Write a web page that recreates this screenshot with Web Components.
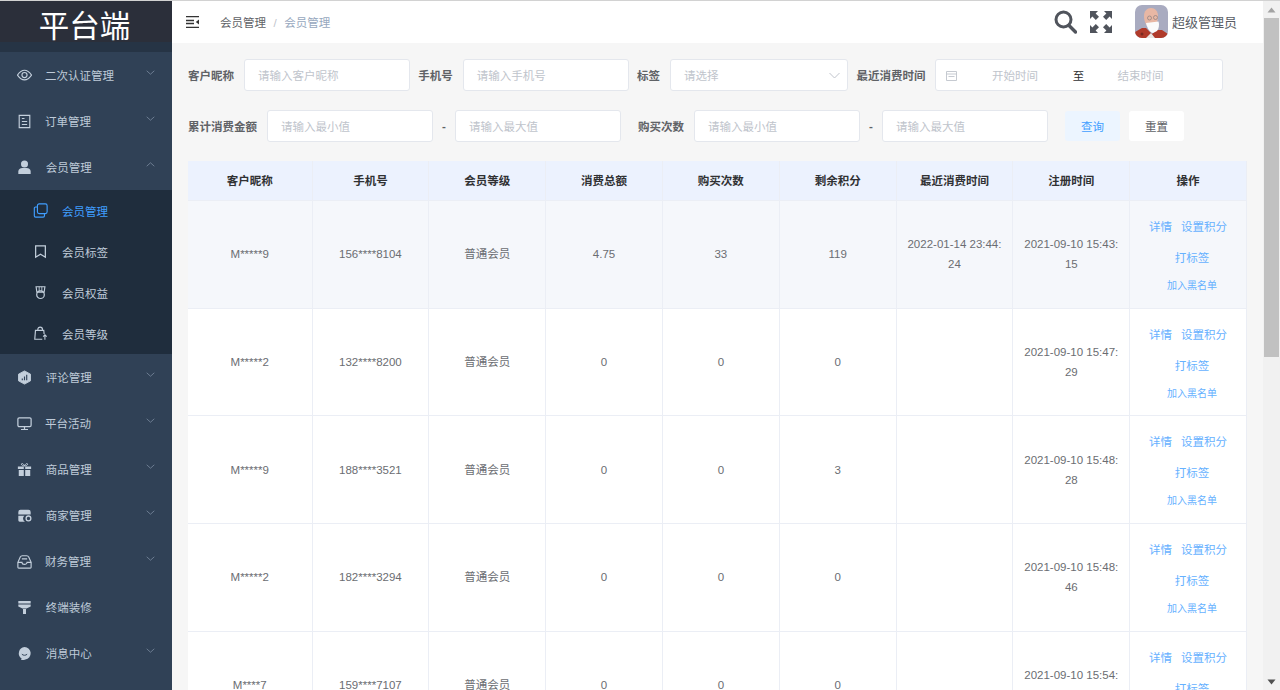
<!DOCTYPE html>
<html lang="zh">
<head>
<meta charset="utf-8">
<title>平台端</title>
<style>
  html, body { margin: 0; height: 100%; overflow: hidden; }
  body { font-family: "Liberation Sans", "Noto Sans CJK SC", sans-serif; font-size: 11.5px; }
</style>
</head>
<body>
<admin-app>
  <side-bar slot="side"></side-bar>
  <top-bar slot="top"></top-bar>
  <filter-form slot="main"></filter-form>
  <member-table slot="main"></member-table>
</admin-app>

<script>
const ICONS = {
  eye: '<path d="M.5 8c2.700-3.800 5.300-5.400 8-5.400s5.300 1.600 8 5.400c-2.700 3.800-5.300 5.400-8 5.400S3.200 11.800.5 8z" fill="none" stroke="currentColor" stroke-width="1.300"/><circle cx="8.500" cy="8" r="2.900" fill="none" stroke="currentColor" stroke-width="1.300"/>',
  doc: '<path d="M2.500 1.500h12v14h-12z" fill="none" stroke="currentColor" stroke-width="1.300"/><path d="M5.500 5h3M5.500 8.500h6M5.500 12h6" stroke="currentColor" stroke-width="1.200"/>',
  user: '<circle cx="8.500" cy="4.500" r="4" fill="currentColor"/><path d="M1.500 16v-3C1.500 10.500 3.500 9 6 9h5c2.500 0 4.500 1.500 4.500 4v3z" fill="currentColor"/>',
  copy: '<rect x="5" y="1" width="11" height="11" rx="2" fill="none" stroke="currentColor" stroke-width="1.300"/><path d="M5 4.500H3A1.500 1.500 0 0 0 1.500 6v8.500A1.500 1.500 0 0 0 3 16h8.500a1.500 1.500 0 0 0 1.500-1.500V12" fill="none" stroke="currentColor" stroke-width="1.300"/>',
  bookmark: '<path d="M3 2h11v13l-5.500-3.500L3 15z" fill="none" stroke="currentColor" stroke-width="1.400"/>',
  medal: '<path d="M3.500 2h10l-.9 6H4.400z" fill="none" stroke="currentColor" stroke-width="1.300"/><path d="M7 2v5M10 2v5" stroke="currentColor" stroke-width="1"/><circle cx="8.500" cy="11" r="4.300" fill="none" stroke="currentColor" stroke-width="1.400"/>',
  bag: '<path d="M10.500 15H2l.8-10h9.400l.4 4" fill="none" stroke="currentColor" stroke-width="1.300"/><path d="M5.500 5V3.800a2.600 2.600 0 0 1 5.200 0V5" fill="none" stroke="currentColor" stroke-width="1.300"/><path d="M13.500 15.500v-5M11.500 12l2-2 2 2" fill="none" stroke="currentColor" stroke-width="1.200"/>',
  chart: '<path d="M8.500 1l6.800 3.700v7.600L8.500 16l-6.800-3.700V4.700z" fill="currentColor" stroke="currentColor" stroke-linejoin="round" stroke-width="1"/><path d="M6 11.500V9.500M8.500 11.500V7.500M11 11.500V5.500" stroke="#304156" stroke-width="1.300"/>',
  monitor: '<rect x="1" y="2" width="15" height="10" rx="1.500" fill="none" stroke="currentColor" stroke-width="1.400"/><path d="M8.500 12v3M4.500 15.300h8" stroke="currentColor" stroke-width="1.400"/>',
  gift: '<path d="M1 5h6.700v3H1zM9.300 5H16v3H9.300zM2 9h5.700v7H2zM9.300 9H15v7H9.300z" fill="currentColor"/><path d="M8.500 4.500C6.800 4.500 5 3.800 5 2.500 5 1.500 7 1 8.500 4.500 10 1 12 1.500 12 2.500c0 1.300-1.800 2-3.500 2z" fill="none" stroke="currentColor" stroke-width="1.100"/>',
  store: '<path d="M1.500 4.500A2.500 2.500 0 0 1 4 2h9a2.500 2.500 0 0 1 2.500 2.500v3h-14z" fill="currentColor"/><path d="M1.500 8.700h7a4 4 0 0 0 .5 6.800H3a1.500 1.500 0 0 1-1.500-1.500z" fill="currentColor"/><circle cx="13" cy="11.800" r="2.700" fill="none" stroke="currentColor" stroke-width="1.500"/>',
  box: '<path d="M1 9.500L3.700 3.500C4.100 2.500 5 2 6 2h5c1 0 1.900.5 2.300 1.500L16 9.500V15a1 1 0 0 1-1 1H2a1 1 0 0 1-1-1z" fill="none" stroke="currentColor" stroke-width="1.300"/><path d="M1 9.500h4.700c0 3 5.600 3 5.600 0H16M5.500 5.500h6" fill="none" stroke="currentColor" stroke-width="1.200"/>',
  brush: '<path d="M1.500 1h14v3H1.500zM1.500 5h14v2.500L10.800 9.500H6.200L1.500 7.500zM6.800 10.300h3.400V16H6.800z" fill="currentColor"/>',
  chat: '<path d="M8.500 1a7.200 7.200 0 0 1 1 14.300c-1.200.5-3.200.8-5 .5.500-.7.700-1.100.7-1.700A7.200 7.200 0 0 1 8.500 1z" fill="currentColor"/><path d="M5.500 9.300c1.500 1.600 4.500 1.600 6 0" fill="none" stroke="#304156" stroke-width="1.100"/>',
  chevron: '<path d="M2 4.500l4.500 4 4.500-4" fill="none" stroke="currentColor" stroke-width=".9"/>',
  chevronUp: '<path d="M2 8.500l4.500-4 4.500 4" fill="none" stroke="currentColor" stroke-width=".9"/>',
};

function icon(name, size = 15, box = 17) {
  return `<svg width="${size}" height="${size}" viewBox="0 0 ${box} ${box}" aria-hidden="true">${ICONS[name]}</svg>`;
}

class AdminApp extends HTMLElement {
  constructor() {
    super();
    this.attachShadow({ mode: 'open' });
    this.shadowRoot.innerHTML = `
      <style>
        :host {
          display: flex;
          height: 100vh;
          box-sizing: border-box;
          padding-top: 1px;
          background: #d2d2d2;
          overflow: hidden;
        }
        .body { flex: 1; min-width: 0; display: flex; flex-direction: column; background: #f6f6f6; }
        .main { flex: 1; min-height: 0; overflow: hidden; padding: 16px 16px 0; }
      </style>
      <slot name="side"></slot>
      <div class="body">
        <slot name="top"></slot>
        <div class="main"><slot name="main"></slot></div>
      </div>
      <page-scrollbar></page-scrollbar>
    `;
  }
}

class PageScrollbar extends HTMLElement {
  constructor() {
    super();
    this.attachShadow({ mode: 'open' });
    this.shadowRoot.innerHTML = `
      <style>
        :host { display: flex; flex-direction: column; align-items: center; width: 17px; background: #f1f1f1; }
        .arrow { height: 17px; flex: none; display: flex; align-items: center; justify-content: center; }
        .thumb { width: 15px; height: 339px; background: #c1c1c1; }
        .last { margin-top: auto; }
      </style>
      <div class="arrow"><svg width="9" height="6" viewBox="0 0 9 6"><path d="M4.500 .5L8.500 5.500H.5z" fill="#a3a3a3"/></svg></div>
      <div class="thumb"></div>
      <div class="arrow last"><svg width="9" height="6" viewBox="0 0 9 6"><path d="M.5 .5h8L4.500 5.500z" fill="#505050"/></svg></div>
    `;
  }
}

class NavItem extends HTMLElement {
  constructor() {
    super();
    this.attachShadow({ mode: 'open' });
    const name = this.getAttribute('icon');
    const arrow = this.getAttribute('arrow');
    const sub = this.hasAttribute('sub');
    this.shadowRoot.innerHTML = `
      <style>
        :host { display: block; color: #bfcbd9; }
        :host([active]) { color: #409eff; }
        .row {
          display: flex;
          align-items: center;
          height: 46px;
          padding-left: 17px;
        }
        .row.sub { height: 41px; padding-left: 33px; }
        .ico { width: 15px; height: 15px; display: flex; color: #c3cfdc; }
        :host([active]) .ico { color: #409eff; }
        .label { margin-left: 13px; flex: 1; white-space: nowrap; }
        :host([solid]) .label { margin-left: 13.800px; }
        .row.sub .label { margin-left: 14px; }
        .arrow { width: 11px; height: 11px; margin-right: 16px; margin-top: -5px; color: #7d8ea3; display: flex; }
      </style>
      <div class="row ${sub ? 'sub' : ''}">
        <span class="ico">${icon(name)}</span>
        <span class="label"><slot></slot></span>
        ${arrow ? `<span class="arrow">${icon(arrow === 'up' ? 'chevronUp' : 'chevron', 11, 13)}</span>` : ''}
      </div>
    `;
  }
}

class SideBar extends HTMLElement {
  constructor() {
    super();
    this.attachShadow({ mode: 'open' });
    this.shadowRoot.innerHTML = `
      <style>
        :host { display: block; width: 172px; flex: none; background: #304156; }
        .logo {
          height: 41px;
          background: #2b2f3a;
          color: #fff;
          font-size: 30.500px;
          line-height: 50px;
          text-align: center;
          overflow: hidden;
          padding-right: 3px;
        }
        .logo-gap { height: 10px; background: #263445; }
        .group { background: #1f2d3d; }
      </style>
      <div class="logo">平台端</div>
      <div class="logo-gap"></div>
      <nav-item icon="eye" arrow="down">二次认证管理</nav-item>
      <nav-item icon="doc" arrow="down">订单管理</nav-item>
      <nav-item solid icon="user" arrow="up">会员管理</nav-item>
      <div class="group">
        <nav-item sub active icon="copy">会员管理</nav-item>
        <nav-item sub icon="bookmark">会员标签</nav-item>
        <nav-item sub icon="medal">会员权益</nav-item>
        <nav-item sub icon="bag">会员等级</nav-item>
      </div>
      <nav-item solid icon="chart" arrow="down">评论管理</nav-item>
      <nav-item icon="monitor" arrow="down">平台活动</nav-item>
      <nav-item solid icon="gift" arrow="down">商品管理</nav-item>
      <nav-item solid icon="store" arrow="down">商家管理</nav-item>
      <nav-item icon="box" arrow="down">财务管理</nav-item>
      <nav-item solid icon="brush">终端装修</nav-item>
      <nav-item solid icon="chat" arrow="down">消息中心</nav-item>
    `;
  }
}

class TopBar extends HTMLElement {
  constructor() {
    super();
    this.attachShadow({ mode: 'open' });
    this.shadowRoot.innerHTML = `
      <style>
        :host {
          display: flex;
          align-items: center;
          flex: none;
          height: 42px;
          background: #fff;
          padding-left: 14px;
          padding-right: 26px;
        }
        .crumbs { margin-left: 21px; margin-top: -1px; color: #606266; white-space: nowrap; }
        .crumbs i { font-style: normal; color: #c0c4cc; margin: 0 7.500px; }
        .crumbs span { color: #97a8be; }
        .tools { margin-left: auto; display: flex; align-items: center; margin-top: -1px; }
        .name { margin-left: 4px; font-size: 13px; color: #5a5e66; white-space: nowrap; }
        .avatar { width: 33px; height: 33px; border-radius: 7px; overflow: hidden; margin-left: 23px; display: block; }
        .full { margin-left: 13px; display: block; }
        .search { display: block; }
      </style>
      <svg width="13" height="12" viewBox="0 0 13 12"><path d="M0 .5h13M0 4.500h8M0 7.500h8M0 11.500h13" stroke="#333" stroke-width="1.300" fill="none"/><path d="M13 3.500v5L9.800 6z" fill="#333"/></svg>
      <div class="crumbs">会员管理<i>/</i><span>会员管理</span></div>
      <div class="tools">
        <svg class="search" width="23" height="24" viewBox="0 0 23 24"><circle cx="9.500" cy="9.500" r="7.500" fill="none" stroke="#50545c" stroke-width="3"/><path d="M15 15.500l6.500 6.500" stroke="#50545c" stroke-width="3.400" stroke-linecap="round"/></svg>
        <svg class="full" width="22" height="22" viewBox="0 0 22 22" fill="#50545c">
          <path d="M0 0h8L5.600 2.400 9 5.800 5.800 9 2.400 5.600 0 8zM22 0v8l-2.400-2.400L16.200 9 13 5.800l3.400-3.400L14 0zM0 22v-8l2.400 2.400L5.800 13 9 16.200l-3.400 3.400L8 22zM22 22h-8l2.400-2.400L13 16.200l3.200-3.200 3.400 3.400L22 14z"/>
        </svg>
        <svg class="avatar" viewBox="0 0 33 33">
          <rect width="33" height="33" fill="#a9abc0"/>
          <path d="M0 33v-6l7-4 4 0 6 6 5-4 5 0 6 4v4z" fill="#b03a2a"/>
          <path d="M11 33l5-5 4 5z" fill="#ebe7e4"/>
          <circle cx="7" cy="29" r="1.500" fill="#7a2a20"/>
          <path d="M9 11c0-5 3-8 7-8s7 3 7 8c0 6-3 12-7 12s-7-6-7-12z" fill="#e8b7a4"/>
          <path d="M11 18l12.500-1.500c1 3 .5 7-1.500 9.500l-4 2c-3-.5-5.500-4-7-10z" fill="#fbfbfb"/>
          <circle cx="14.500" cy="13" r="2" fill="none" stroke="#8a7f80" stroke-width=".7"/>
          <circle cx="20.500" cy="12.500" r="2" fill="none" stroke="#8a7f80" stroke-width=".7"/>
        </svg>
        <span class="name">超级管理员</span>
      </div>
    `;
  }
}

class FieldBox extends HTMLElement {
  constructor() {
    super();
    this.attachShadow({ mode: 'open' });
    this.shadowRoot.innerHTML = `
      <style>
        :host {
          display: flex;
          align-items: center;
          box-sizing: border-box;
          width: var(--w, 166px);
          height: 32px;
          flex: none;
          padding: 0 13px;
          background: #fff;
          border: 1px solid #e4e7ed;
          border-radius: 3px;
          color: #c0c4cc;
          white-space: nowrap;
        }
        .end { margin-left: auto; margin-right: -6px; display: flex; color: #c0c4cc; }
      </style>
      <slot></slot>
      <span class="end"><slot name="end"></slot></span>
    `;
  }
}

class DateRange extends HTMLElement {
  constructor() {
    super();
    this.attachShadow({ mode: 'open' });
    this.shadowRoot.innerHTML = `
      <style>
        :host {
          display: flex;
          align-items: center;
          box-sizing: border-box;
          width: 288px;
          height: 32px;
          flex: none;
          padding-left: 10px;
          background: #fff;
          border: 1px solid #e4e7ed;
          border-radius: 3px;
          color: #c0c4cc;
          white-space: nowrap;
        }
        svg { flex: none; display: block; }
        span { text-align: center; }
        .start { width: 115px; }
        .to { width: 12px; color: #303133; }
        .stop { width: 112px; }
      </style>
      <svg width="11" height="11" viewBox="0 0 11 11"><path d="M.5 1.500h10v9H.5zM.5 4h10M2.500 6.500h6" fill="none" stroke="#c0c4cc" stroke-width=".9"/></svg>
      <span class="start">开始时间</span>
      <span class="to">至</span>
      <span class="stop">结束时间</span>
    `;
  }
}

class FilterForm extends HTMLElement {
  constructor() {
    super();
    this.attachShadow({ mode: 'open' });
    this.shadowRoot.innerHTML = `
      <style>
        :host { display: flex; flex-direction: column; gap: 19px; margin-bottom: 19px; }
        .line { display: flex; align-items: center; height: 32px; }
        label { font-weight: bold; color: #606266; white-space: nowrap; margin-right: 10px; flex: none; }
        field-box + label, date-range + label { margin-left: 8.300px; }
        .dash { width: 22px; text-align: center; flex: none; font-weight: bold; color: #606266; }
        .gap { margin-left: 17px; }
        .btn {
          display: flex;
          align-items: center;
          justify-content: center;
          width: 55px;
          height: 30px;
          border-radius: 3px;
          flex: none;
        }
        .query { margin-left: 17px; background: #ecf5ff; color: #409eff; }
        .reset { margin-left: 9px; background: #fff; color: #606266; }
      </style>
      <div class="line">
        <label>客户昵称</label><field-box>请输入客户昵称</field-box>
        <label>手机号</label><field-box>请输入手机号</field-box>
        <label>标签</label>
        <field-box style="--w:178px">请选择<svg slot="end" width="11" height="11" viewBox="0 0 11 11"><path d="M.5 3l5 5 5-5" fill="none" stroke="#c0c4cc" stroke-width="1"/></svg></field-box>
        <label>最近消费时间</label><date-range></date-range>
      </div>
      <div class="line">
        <label>累计消费金额</label><field-box>请输入最小值</field-box>
        <span class="dash">-</span><field-box>请输入最大值</field-box>
        <label class="gap">购买次数</label><field-box>请输入最小值</field-box>
        <span class="dash">-</span><field-box>请输入最大值</field-box>
        <span class="btn query">查询</span><span class="btn reset">重置</span>
      </div>
    `;
  }
}

const MEMBERS = [
  ['M*****9', '156****8104', '普通会员', '4.75', '33', '119', '2022-01-14 23:44:24', '2021-09-10 15:43:15'],
  ['M*****2', '132****8200', '普通会员', '0', '0', '0', '', '2021-09-10 15:47:29'],
  ['M*****9', '188****3521', '普通会员', '0', '0', '3', '', '2021-09-10 15:48:28'],
  ['M*****2', '182****3294', '普通会员', '0', '0', '0', '', '2021-09-10 15:48:46'],
  ['M****7', '159****7107', '普通会员', '0', '0', '0', '', '2021-09-10 15:54:18'],
];
const COLUMNS = ['客户昵称', '手机号', '会员等级', '消费总额', '购买次数', '剩余积分', '最近消费时间', '注册时间', '操作'];

class MemberTable extends HTMLElement {
  constructor() {
    super();
    this.attachShadow({ mode: 'open' });
    const head = COLUMNS.map(c => `<div class="cell">${c}</div>`).join('');
    const rows = MEMBERS.map((m, i) => `
      <div class="row ${i === 0 ? 'hover' : ''}">
        ${m.map(v => `<div class="cell">${v}</div>`).join('')}
        <div class="cell ops">
          <div class="line"><a>详情</a><a>设置积分</a></div>
          <div class="line shift"><a>打标签</a></div>
          <div class="line shift small"><a>加入黑名单</a></div>
        </div>
      </div>`).join('');
    this.shadowRoot.innerHTML = `
      <style>
        :host { display: block; width: 1059px; background: #fff; color: #6b6d72; }
        .row, .head {
          display: grid;
          grid-template-columns: 124.500px repeat(8, 1fr);
          box-sizing: border-box;
          height: 107.700px;
          border-bottom: 1px solid #ebeef5;
        }
        .head {
          height: 40px;
          background: #ecf2fe;
          color: #303133;
          font-weight: bold;
        }
        .head .cell { padding-top: 1.500px; }
        .hover { background: #f5f7fb; }
        .cell {
          display: flex;
          align-items: center;
          justify-content: center;
          box-sizing: border-box;
          padding: 0 8px;
          border-right: 1px solid #ebeef5;
          text-align: center;
          line-height: 20px;
          word-break: break-all;
        }
        .ops { flex-direction: column; padding: 4px 0 0; white-space: nowrap; }
        .line { height: 20px; line-height: 20px; display: flex; justify-content: center; gap: 9px; color: #66b1ff; }
        .shift { margin-top: 11px; padding-left: 8px; }
        .small { margin-top: 8px; font-size: 10px; }
      </style>
      <div class="head">${head}</div>
      ${rows}
    `;
  }
}

customElements.define('page-scrollbar', PageScrollbar);
customElements.define('nav-item', NavItem);
customElements.define('side-bar', SideBar);
customElements.define('top-bar', TopBar);
customElements.define('field-box', FieldBox);
customElements.define('date-range', DateRange);
customElements.define('filter-form', FilterForm);
customElements.define('member-table', MemberTable);
customElements.define('admin-app', AdminApp);
</script>
</body>
</html>
